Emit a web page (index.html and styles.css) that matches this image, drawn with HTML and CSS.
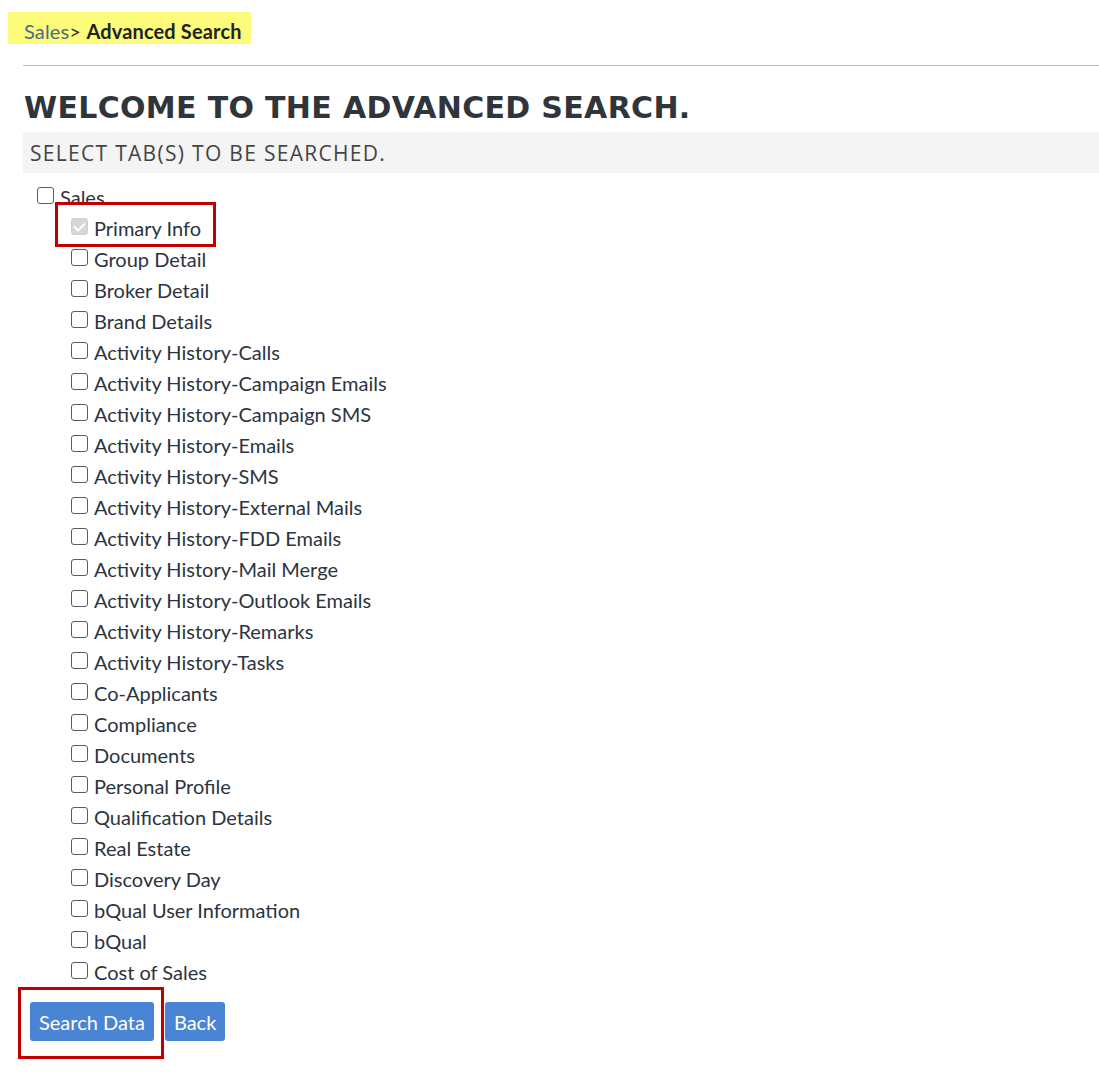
FILE: index.html
```html
<!DOCTYPE html>
<html>
<head>
<meta charset="utf-8">
<link rel="stylesheet" href="styles.css">
</head>
<body>
<div class="crumb"><a class="crumb-link">Sales</a>&gt; <b>Advanced Search</b></div>
<div class="content">
  <hr class="rule">
  <h1 class="title">WELCOME TO THE ADVANCED SEARCH.</h1>
  <div class="bar">SELECT TAB(S) TO BE SEARCHED.</div>
  <ul class="tree">
    <li class="parent"><label class="row"><span class="box"></span><span>Sales</span></label>
      <ul class="children">
        <li class="marked"><label class="row"><span class="box checked"></span><span>Primary Info</span></label></li>
        <li><label class="row"><span class="box"></span><span>Group Detail</span></label></li>
        <li><label class="row"><span class="box"></span><span>Broker Detail</span></label></li>
        <li><label class="row"><span class="box"></span><span>Brand Details</span></label></li>
        <li><label class="row"><span class="box"></span><span>Activity History-Calls</span></label></li>
        <li><label class="row"><span class="box"></span><span>Activity History-Campaign Emails</span></label></li>
        <li><label class="row"><span class="box"></span><span>Activity History-Campaign SMS</span></label></li>
        <li><label class="row"><span class="box"></span><span>Activity History-Emails</span></label></li>
        <li><label class="row"><span class="box"></span><span>Activity History-SMS</span></label></li>
        <li><label class="row"><span class="box"></span><span>Activity History-External Mails</span></label></li>
        <li><label class="row"><span class="box"></span><span>Activity History-FDD Emails</span></label></li>
        <li><label class="row"><span class="box"></span><span>Activity History-Mail Merge</span></label></li>
        <li><label class="row"><span class="box"></span><span>Activity History-Outlook Emails</span></label></li>
        <li><label class="row"><span class="box"></span><span>Activity History-Remarks</span></label></li>
        <li><label class="row"><span class="box"></span><span>Activity History-Tasks</span></label></li>
        <li><label class="row"><span class="box"></span><span>Co-Applicants</span></label></li>
        <li><label class="row"><span class="box"></span><span>Compliance</span></label></li>
        <li><label class="row"><span class="box"></span><span>Documents</span></label></li>
        <li><label class="row"><span class="box"></span><span>Personal Profile</span></label></li>
        <li><label class="row"><span class="box"></span><span>Qualification Details</span></label></li>
        <li><label class="row"><span class="box"></span><span>Real Estate</span></label></li>
        <li><label class="row"><span class="box"></span><span>Discovery Day</span></label></li>
        <li><label class="row"><span class="box"></span><span>bQual User Information</span></label></li>
        <li><label class="row"><span class="box"></span><span>bQual</span></label></li>
        <li><label class="row"><span class="box"></span><span>Cost of Sales</span></label></li>
      </ul>
    </li>
  </ul>
  <div class="actions">
    <span class="btn-wrap marked-btn"><button class="btn">Search Data</button></span>
    <button class="btn">Back</button>
  </div>
</div>
</body>
</html>
```
FILE: styles.css
```css
html, body {
  margin: 0;
  padding: 0;
  background: #fff;
}
body {
  font-family: "Lato", "Liberation Sans", sans-serif;
  color: #2b3440;
}
.crumb {
  display: inline-block;
  margin: 12px 0 0 8px;
  height: 29px;
  padding: 3px 9px 0 16px;
  line-height: 32px;
  background: #fcfc7a;
  font-size: 20px;
  letter-spacing: 0.15px;
  color: #333;
}
.crumb-link {
  color: #4a6a88;
}
.crumb b {
  color: #222;
  font-weight: 700;
}
.content {
  padding-left: 23px;
  padding-bottom: 40px;
}
.rule {
  margin: 21px 0 0 0;
  border: 0;
  border-top: 1px solid #bcbcbc;
  height: 0;
}
.title {
  margin: 22px 0 0 1px;
  font-family: "DejaVu Sans", sans-serif;
  font-weight: 700;
  font-size: 30px;
  line-height: 40px;
  color: #30353b;
  letter-spacing: 0.33px;
}
.bar {
  margin-top: 4px;
  height: 41px;
  line-height: 43px;
  background: #f4f4f4;
  padding-left: 7px;
  font-family: "Open Sans", sans-serif;
  font-size: 21px;
  letter-spacing: 1.3px;
  color: #444;
}
.tree, .children {
  list-style: none;
  margin: 0;
  padding: 0;
}
.tree {
  margin-top: 13px;
  padding-left: 14px;
}
.children {
  padding-left: 34px;
}
.row {
  display: flex;
  align-items: flex-start;
  gap: 6px;
  height: 31px;
  font-size: 20px;
  line-height: 22px;
}
.box {
  width: 15px;
  height: 15px;
  border: 1px solid #5c5c5c;
  border-radius: 3px;
  background: #fff;
  margin-top: 1px;
  flex: none;
}
.box.checked {
  border-color: #cfcfcf;
  background: #d6d6d6;
  position: relative;
}
.box.checked::after {
  content: "";
  position: absolute;
  left: 4px;
  top: 1px;
  width: 5px;
  height: 9px;
  border: solid #fff;
  border-width: 0 2px 2px 0;
  transform: rotate(45deg);
}
.marked {
  position: relative;
}
.marked::before {
  content: "";
  position: absolute;
  left: -16px;
  top: -15px;
  width: 155px;
  height: 39px;
  border: 3px solid #c00000;
  pointer-events: none;
}
.actions {
  display: flex;
  gap: 11px;
  margin-top: 10px;
  padding-left: 7px;
}
.btn-wrap {
  position: relative;
  display: flex;
}
.marked-btn::before {
  content: "";
  position: absolute;
  left: -12px;
  top: -15px;
  right: -10px;
  bottom: -18px;
  border: 3px solid #c00000;
}
.btn {
  font-family: "Lato", sans-serif;
  font-size: 20px;
  color: #fff;
  background: #4a84d4;
  border: 0;
  border-radius: 3px;
  height: 39px;
  padding: 0 9px;
}
```
